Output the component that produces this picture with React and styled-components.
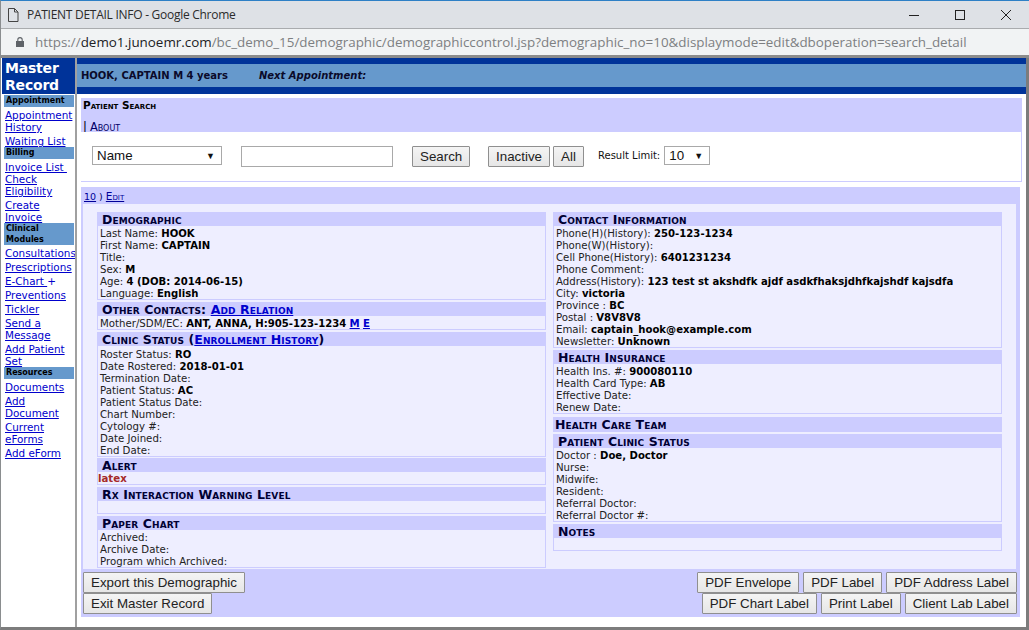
import React from 'react';
import styled, { createGlobalStyle } from 'styled-components';

const Global = createGlobalStyle`
  html, body { margin: 0; padding: 0; background: #fff; overflow: hidden; }
`;

const Win = styled.div`
  width: 1029px; height: 630px; overflow: hidden; box-sizing: border-box;
  display: flex; flex-direction: column; background: #fff;
  border-top: 1px solid #2e80c6;
  border-left: 1px solid #8a8d8f;
  border-bottom: 3px solid #7c7c7c;
  font-family: "DejaVu Sans", Verdana, sans-serif;
`;
const TitleBar = styled.div`
  height: 28px; box-sizing: border-box; background: #dee1e6; border-bottom: 1px solid #a9abae;
  display: flex; align-items: center; padding-left: 7px; flex: none;
`;
const TitleText = styled.div`
  font: 12px/16px "Open Sans", sans-serif; color: #2b2b2b; margin-left: 8px; flex: 1; letter-spacing: -0.27px;
`;
const WinBtn = styled.div`
  width: 46px; height: 27px; display: flex; align-items: center; justify-content: center;
`;
const AddressBar = styled.div`
  height: 26px; background: #f1f3f4; display: flex; align-items: center; padding-left: 15px; flex: none;
`;
const Url = styled.div`
  font: 13.4px/18px "Open Sans", sans-serif; color: #7d7f82; margin-left: 11px; white-space: nowrap;
  b { font-weight: 400; color: #202124; }
`;
const GreyRule = styled.div` height: 3px; background: #8c8c8c; flex: none; `;

const Page = styled.div` flex: 1; display: flex; min-height: 0; border-right: 3px solid #7c7c7c; `;
const Nav = styled.div`
  width: 73px; margin-left: 1px; flex: none; font-size: 10.4px; line-height: 12px;
`;
const NavTitle = styled.div`
  background: #003399; color: #fff; font: bold 14px/17px "DejaVu Sans", sans-serif; padding: 2px 0 0 3px; height: 34px;
  margin-bottom: 1px; letter-spacing: -0.2px;
`;
const NavHead = styled.div`
  background: #6699cc; color: #000; font-weight: bold; font-size: 8px; line-height: ${p => p.$tall ? '11px' : '12px'};
  padding: 0 2px; margin: 0 1px 0 2px;
`;
const NavGroup = styled.div` margin: 2px 0 0 3px; `;
const NavLink = styled.a`
  display: block; color: #0000cc; text-decoration: underline; white-space: nowrap;
  span { text-decoration: none; display: inline-block; }
`;
const NavDivider = styled.div` width: 2px; background: #a0a0a0; flex: none; `;

const Main = styled.div` flex: 1; min-width: 0; display: flex; flex-direction: column; `;
const Band = styled.div`
  border-top: 6px solid #003399; border-bottom: 7px solid #003399; background: #6699cc; height: 23px;
  display: flex; align-items: center; padding-left: 4px; font-size: 10px; font-weight: bold; color: #0a0a2a; flex: none;
  em { margin-left: 31px; }
`;
const SearchPanel = styled.div`
  margin: 4px 4px 0 4px; background: #ccccff; height: 84px; display: flex; flex-direction: column; flex: none;
`;
const SearchHead = styled.div`
  height: 34px; box-sizing: border-box; padding: 1px 2px 0; font-size: 10px; color: #000;
`;
const SmallTitle = styled.div`
  font-variant: small-caps; font-weight: bold; font-size: 10.5px; line-height: 12px; height: 22px;
`;
const AboutRow = styled.div`
  font-size: 11.5px; line-height: 12px; font-variant: small-caps;
  a { color: #000066; text-decoration: underline; margin-left: 3px; }
`;
const SearchBody = styled.div`
  flex: 1; background: #fff; margin: 0 1px 1px 0; display: flex; align-items: flex-start; padding: 14px 0 0 11px;
`;
const Select = styled.div`
  width: ${p => p.$w}px; height: 19px; box-sizing: border-box; border: 1px solid #a9a9a9; background: #fff; flex: none;
  font: 13.33px/16px "Liberation Sans", sans-serif; display: flex; align-items: center; justify-content: space-between;
  padding: 0 6px 0 4px; color: #111;
  i { font-style: normal; font-size: 9px; }
`;
const TextBox = styled.div`
  width: 152px; height: 21px; box-sizing: border-box; border: 1px solid #a9a9a9; background: #fff; margin: 0 19px; flex: none;
`;
const Btn = styled.button`
  height: 21px; box-sizing: border-box; padding: 0 7px; margin: 0 ${p => p.$mr || 0}px 0 0; border: 1px solid #8f8f8f; border-radius: 1px;
  width: ${p => (p.$w ? `${p.$w}px` : 'auto')};
  background: linear-gradient(#f4f4f4, #e6e6e6); font: 13.33px/17px "Liberation Sans", sans-serif; color: #222; flex: none; white-space: nowrap;
`;
const Limit = styled.div` font-size: 10px; line-height: 20px; margin: 0 4px 0 14px; color: #111; `;

const RecordPanel = styled.div`
  margin: 5px 6px 0 4px; background: #ccccff; display: flex; flex-direction: column; flex: none;
`;
const RecordHead = styled.div`
  height: 17px; padding: 3px 0 0 3px; box-sizing: border-box; font-size: 9.5px; line-height: 12px; color: #000066;
  a { color: #000099; text-decoration: underline; }
  a + a { font-variant: small-caps; font-size: 10.5px; }
`;
const RecordBody = styled.div`
  background: #eeeeff; margin: 0 4px 0 2px; height: 365px; box-sizing: border-box; padding: 8px 14px 0 14px;
  display: grid; grid-template-columns: 449px 449px; column-gap: 7px; align-items: start;
`;
const Col = styled.div` display: flex; flex-direction: column; gap: 2px; `;
const Section = styled.div`
  border: 1px solid #ccccff; border-top: 0; margin-bottom: ${p => p.$mb || 0}px;
`;
const Head = styled.div`
  background: #ccccff; height: 14px; margin: 0 -1px; padding-left: ${p => p.$flush ? 2 : 5}px;
  font-variant: small-caps; font-weight: bold; font-size: 12.5px; line-height: 16px; letter-spacing: 0.1px; color: #000033; white-space: nowrap;
  a { color: #0000cc; text-decoration: underline; }
`;
const Rows = styled.div`
  box-sizing: border-box; padding: ${p => (p.$pt ?? 1) + 1}px 0 0 2px; margin-bottom: -1px;
  font-size: 10.2px; line-height: 12px; color: #222;
  min-height: ${p => p.$min || 0}px;
  b { color: #000; font-weight: bold; font-size: 10.1px; }
  a { color: #0000cc; font-weight: bold; text-decoration: underline; }
`;
const Row = styled.div` white-space: nowrap; `;
const Latex = styled.div` color: #a52a2a; font-weight: bold; margin-left: -2px; `;

const Footer = styled.div`
  height: 48px; box-sizing: border-box; padding: 3px 3px 0 2px; display: flex; justify-content: space-between;
`;
const BtnCol = styled.div` display: flex; flex-direction: column; align-items: ${p => p.$end ? 'flex-end' : 'flex-start'}; `;
const BtnRow = styled.div` display: flex; gap: 4px; `;

function Line({ k, v }) {
  return <Row>{k} {v && <b>{v}</b>}</Row>;
}

export default function App() {
  return (
    <Win>
      <Global />
      <TitleBar>
        <svg width="11" height="14" viewBox="0 0 11 14" fill="none" stroke="#444" strokeWidth="1"><path d="M0.5 0.5h6l3.5 3.5v9.5h-9.5z" /><path d="M6.5 0.5v3.5h3.5" /></svg>
        <TitleText>PATIENT DETAIL INFO - Google Chrome</TitleText>
        <WinBtn><svg width="12" height="12"><path d="M1 6.5h10" stroke="#222" /></svg></WinBtn>
        <WinBtn><svg width="12" height="12"><rect x="1.5" y="1.5" width="9" height="9" fill="none" stroke="#222" /></svg></WinBtn>
        <WinBtn><svg width="12" height="12"><path d="M1 1l10 10M11 1L1 11" stroke="#222" /></svg></WinBtn>
      </TitleBar>
      <AddressBar>
        <svg width="8" height="10" viewBox="0 0 8 10"><path d="M1.8 4.5V2.8a2.2 2.2 0 0 1 4.4 0V4.5" fill="none" stroke="#5f6368" strokeWidth="1.1" /><rect x="0" y="4" width="8" height="6" fill="#5f6368" /></svg>
        <Url>https://<b>demo1.junoemr.com</b>/bc_demo_15/demographic/demographiccontrol.jsp?demographic_no=10&amp;displaymode=edit&amp;dboperation=search_detail</Url>
      </AddressBar>
      <GreyRule />
      <Page>
        <Nav>
          <NavTitle>Master<br />Record</NavTitle>
          <NavHead>Appointment</NavHead>
          <NavGroup><NavLink>Appointment</NavLink><NavLink>History</NavLink></NavGroup>
          <NavGroup><NavLink>Waiting List</NavLink></NavGroup>
          <NavHead>Billing</NavHead>
          <NavGroup><NavLink>Invoice List&nbsp;</NavLink><NavLink>Check</NavLink><NavLink>Eligibility</NavLink></NavGroup>
          <NavGroup><NavLink>Create</NavLink><NavLink>Invoice</NavLink></NavGroup>
          <NavHead $tall>Clinical<br />Modules</NavHead>
          <NavGroup><NavLink>Consultations</NavLink></NavGroup>
          <NavGroup><NavLink>Prescriptions</NavLink></NavGroup>
          <NavGroup><NavLink>E-Chart <span>+</span></NavLink></NavGroup>
          <NavGroup><NavLink>Preventions</NavLink></NavGroup>
          <NavGroup><NavLink>Tickler</NavLink></NavGroup>
          <NavGroup><NavLink>Send a</NavLink><NavLink>Message</NavLink></NavGroup>
          <NavGroup><NavLink>Add Patient</NavLink><NavLink>Set</NavLink></NavGroup>
          <NavHead>Resources</NavHead>
          <NavGroup><NavLink>Documents</NavLink></NavGroup>
          <NavGroup><NavLink>Add</NavLink><NavLink>Document</NavLink></NavGroup>
          <NavGroup><NavLink>Current</NavLink><NavLink>eForms</NavLink></NavGroup>
          <NavGroup><NavLink>Add eForm</NavLink></NavGroup>
        </Nav>
        <NavDivider />
        <Main>
          <Band>HOOK, CAPTAIN M 4 years <em>Next Appointment:</em></Band>
          <SearchPanel>
            <SearchHead>
              <SmallTitle>Patient Search</SmallTitle>
              <AboutRow>|<a>About</a></AboutRow>
            </SearchHead>
            <SearchBody>
              <Select $w={130}>Name <i>▼</i></Select>
              <TextBox />
              <Btn $mr={18} $w={58}>Search</Btn>
              <Btn $mr={3} $w={62}>Inactive</Btn>
              <Btn $w={31}>All</Btn>
              <Limit>Result Limit:</Limit>
              <Select $w={46}>10 <i>▼</i></Select>
            </SearchBody>
          </SearchPanel>
          <RecordPanel>
            <RecordHead><a>10</a> ) <a>Edit</a></RecordHead>
            <RecordBody>
              <Col>
                <Section>
                  <Head>Demographic</Head>
                  <Rows>
                    <Line k="Last Name:" v="HOOK" />
                    <Line k="First Name:" v="CAPTAIN" />
                    <Line k="Title:" />
                    <Line k="Sex:" v="M" />
                    <Line k="Age:" v="4 (DOB: 2014-06-15)" />
                    <Line k="Language:" v="English" />
                  </Rows>
                </Section>
                <Section>
                  <Head>Other Contacts: <a>Add Relation</a></Head>
                  <Rows><Row>Mother/SDM/EC: <b>ANT, ANNA, H:905-123-1234</b> <a>M</a> <a>E</a></Row></Rows>
                </Section>
                <Section $mb={-1}>
                  <Head>Clinic Status (<a>Enrollment History</a>)</Head>
                  <Rows $pt={2}>
                    <Line k="Roster Status:" v="RO" />
                    <Line k="Date Rostered:" v="2018-01-01" />
                    <Line k="Termination Date:" />
                    <Line k="Patient Status:" v="AC" />
                    <Line k="Patient Status Date:" />
                    <Line k="Chart Number:" />
                    <Line k="Cytology #:" />
                    <Line k="Date Joined:" />
                    <Line k="End Date:" />
                  </Rows>
                </Section>
                <Section>
                  <Head>Alert</Head>
                  <Rows $pt={0}><Latex>latex</Latex></Rows>
                </Section>
                <Section>
                  <Head>Rx Interaction Warning Level</Head>
                  <Rows $pt={0} $min={13} />
                </Section>
                <Section>
                  <Head>Paper Chart</Head>
                  <Rows>
                    <Line k="Archived:" />
                    <Line k="Archive Date:" />
                    <Line k="Program which Archived:" />
                  </Rows>
                </Section>
              </Col>
              <Col>
                <Section>
                  <Head>Contact Information</Head>
                  <Rows>
                    <Line k="Phone(H)(History):" v="250-123-1234" />
                    <Line k="Phone(W)(History):" />
                    <Line k="Cell Phone(History):" v="6401231234" />
                    <Line k="Phone Comment:" />
                    <Line k="Address(History):" v="123 test st akshdfk ajdf asdkfhaksjdhfkajshdf kajsdfa" />
                    <Line k="City:" v="victoria" />
                    <Line k="Province :" v="BC" />
                    <Line k="Postal :" v="V8V8V8" />
                    <Line k="Email:" v="captain_hook@example.com" />
                    <Line k="Newsletter:" v="Unknown" />
                  </Rows>
                </Section>
                <Section $mb={1}>
                  <Head>Health Insurance</Head>
                  <Rows>
                    <Line k="Health Ins. #:" v="900080110" />
                    <Line k="Health Card Type:" v="AB" />
                    <Line k="Effective Date:" />
                    <Line k="Renew Date:" />
                  </Rows>
                </Section>
                <Section>
                  <Head $flush>Health Care Team</Head>
                </Section>
                <Section>
                  <Head>Patient Clinic Status</Head>
                  <Rows>
                    <Line k="Doctor :" v="Doe, Doctor" />
                    <Line k="Nurse:" />
                    <Line k="Midwife:" />
                    <Line k="Resident:" />
                    <Line k="Referral Doctor:" />
                    <Line k="Referral Doctor #:" />
                  </Rows>
                </Section>
                <Section>
                  <Head>Notes</Head>
                  <Rows $pt={0} $min={13} />
                </Section>
              </Col>
            </RecordBody>
            <Footer>
              <BtnCol>
                <Btn>Export this Demographic</Btn>
                <Btn>Exit Master Record</Btn>
              </BtnCol>
              <BtnCol $end>
                <BtnRow><Btn>PDF Envelope</Btn><Btn>PDF Label</Btn><Btn>PDF Address Label</Btn></BtnRow>
                <BtnRow><Btn>PDF Chart Label</Btn><Btn>Print Label</Btn><Btn>Client Lab Label</Btn></BtnRow>
              </BtnCol>
            </Footer>
          </RecordPanel>
        </Main>
      </Page>
    </Win>
  );
}
